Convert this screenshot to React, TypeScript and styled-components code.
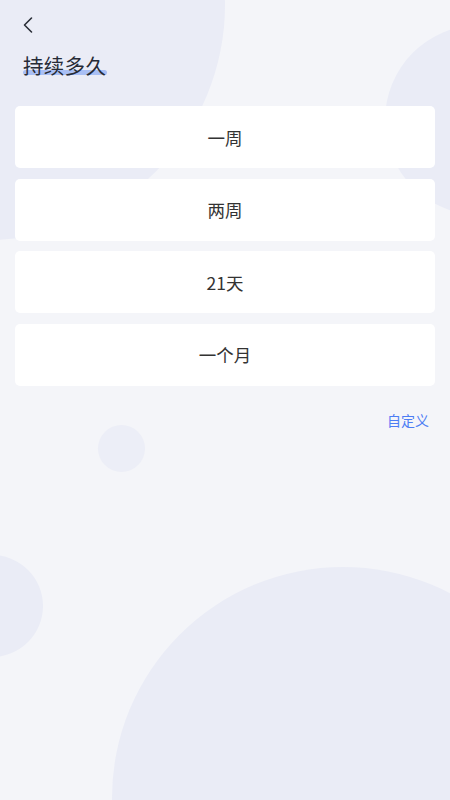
import React from "react";
import styled, { createGlobalStyle } from "styled-components";

const GlobalStyle = createGlobalStyle`
  html, body {
    margin: 0;
    padding: 0;
    background: #f4f5f9;
  }
  * {
    box-sizing: border-box;
  }
`;

const Page = styled.div`
  position: relative;
  width: 450px;
  height: 800px;
  overflow: hidden;
  background: #f4f5f9;
  font-family: "Noto Sans CJK SC", "Noto Sans", sans-serif;
`;

const Bubble = styled.div<{ $x: number; $y: number; $r: number; $tone?: string }>`
  position: absolute;
  left: ${(p) => p.$x - p.$r}px;
  top: ${(p) => p.$y - p.$r}px;
  width: ${(p) => p.$r * 2}px;
  height: ${(p) => p.$r * 2}px;
  border-radius: 50%;
  background: ${(p) => p.$tone ?? "#eaecf6"};
`;

const Content = styled.div`
  position: relative;
  display: flex;
  flex-direction: column;
`;

const Header = styled.div`
  display: flex;
  flex-direction: column;
  padding: 16px 0 0 22px;
`;

const BackButton = styled.button`
  width: 12px;
  height: 18px;
  padding: 0;
  border: none;
  background: transparent;
  display: flex;
  cursor: pointer;
`;

const Title = styled.h1`
  position: relative;
  align-self: flex-start;
  margin: 17px 0 0 1px;
  font-size: 20.5px;
  line-height: 28px;
  font-weight: 400;
  color: #262b36;
  letter-spacing: 0.3px;
`;

const TitleMark = styled.span`
  position: absolute;
  left: 0;
  right: -1px;
  bottom: 4px;
  height: 5px;
  border-radius: 3px;
  background: #a9bff4;
`;

const TitleText = styled.span`
  position: relative;
`;

const OptionList = styled.div`
  display: flex;
  flex-direction: column;
  gap: 10.5px;
  padding: 0 15px;
  margin-top: 27px;
`;

const Option = styled.div`
  height: 62px;
  border-radius: 5px;
  background: #ffffff;
  display: flex;
  align-items: center;
  justify-content: center;
  font-size: 17.5px;
  color: #333333;
`;

const Footer = styled.div`
  display: flex;
  justify-content: flex-end;
  padding: 24px 21px 0 0;
`;

const CustomLink = styled.span`
  font-size: 14px;
  line-height: 20px;
  color: #4d7df4;
`;

const options = ["一周", "两周", "21天", "一个月"];

export default function App() {
  return (
    <Page>
      <GlobalStyle />
      <Bubble $x={-10} $y={5} $r={235} />
      <Bubble $x={480} $y={120} $r={95} />
      <Bubble $x={121.5} $y={448.5} $r={23.5} $tone="#eceef7" />
      <Bubble $x={-8} $y={606} $r={51} />
      <Bubble $x={343} $y={798} $r={231} />
      <Content>
        <Header>
          <BackButton aria-label="back">
            <svg width="12" height="18" viewBox="0 0 12 18">
              <path
                d="M9.5 2 L2.5 9 L9.5 16"
                fill="none"
                stroke="#2b2f38"
                strokeWidth="1.6"
                strokeLinecap="round"
                strokeLinejoin="round"
              />
            </svg>
          </BackButton>
          <Title>
            <TitleMark />
            <TitleText>持续多久</TitleText>
          </Title>
        </Header>
        <OptionList>
          {options.map((o) => (
            <Option key={o}>{o}</Option>
          ))}
        </OptionList>
        <Footer>
          <CustomLink>自定义</CustomLink>
        </Footer>
      </Content>
    </Page>
  );
}
